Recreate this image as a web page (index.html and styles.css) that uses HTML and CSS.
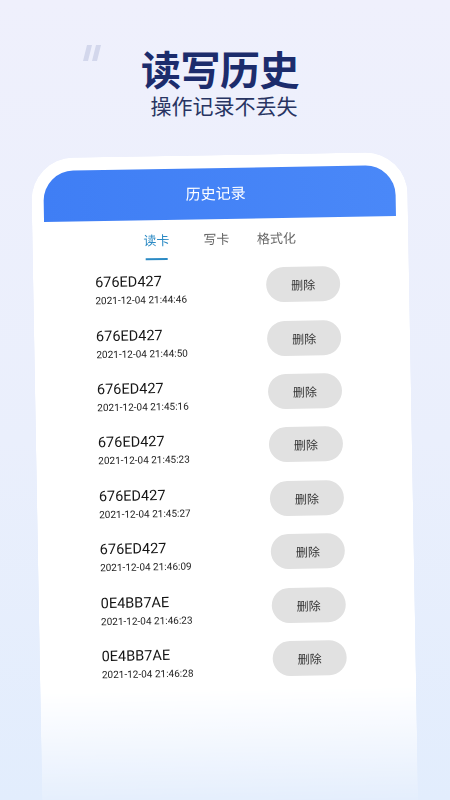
FILE: index.html
```html
<!DOCTYPE html>
<html lang="zh-CN">
<head>
  <meta charset="UTF-8">
  <meta name="viewport" content="width=device-width, initial-scale=1">
  <title>读写历史</title>
  <link rel="stylesheet" href="styles.css">
</head>
<body>
  <div class="hero">
    <svg class="quote" width="18" height="16" viewBox="0 0 18 16">
      <polygon points="4,0 9,0 5,16 0,16" fill="#d3d7ec"/>
      <polygon points="13,0 18,0 14,16 9,16" fill="#d3d7ec"/>
    </svg>
    <div class="title">读写历史</div>
    <div class="subtitle">操作记录不丢失</div>
  </div>

  <div class="phone">
    <div class="screen">
      <div class="topbar">历史记录</div>
      <div class="tabs">
        <div class="tab active">读卡</div>
        <div class="tab">写卡</div>
        <div class="tab">格式化</div>
      </div>
      <ul class="history">
        <li><div class="info"><span class="code">676ED427</span><span class="date">2021-12-04 21:44:46</span></div><button class="del-btn">删除</button></li>
        <li><div class="info"><span class="code">676ED427</span><span class="date">2021-12-04 21:44:50</span></div><button class="del-btn">删除</button></li>
        <li><div class="info"><span class="code">676ED427</span><span class="date">2021-12-04 21:45:16</span></div><button class="del-btn">删除</button></li>
        <li><div class="info"><span class="code">676ED427</span><span class="date">2021-12-04 21:45:23</span></div><button class="del-btn">删除</button></li>
        <li><div class="info"><span class="code">676ED427</span><span class="date">2021-12-04 21:45:27</span></div><button class="del-btn">删除</button></li>
        <li><div class="info"><span class="code">676ED427</span><span class="date">2021-12-04 21:46:09</span></div><button class="del-btn">删除</button></li>
        <li><div class="info"><span class="code">0E4BB7AE</span><span class="date">2021-12-04 21:46:23</span></div><button class="del-btn">删除</button></li>
        <li><div class="info"><span class="code">0E4BB7AE</span><span class="date">2021-12-04 21:46:28</span></div><button class="del-btn">删除</button></li>
      </ul>
    </div>
  </div>
</body>
</html>
```

FILE: styles.css
```css
html, body {
  height: 100%;
}
body {
  margin: 0;
  overflow: hidden;
  font-family: Roboto, "Noto Sans CJK SC", sans-serif;
  background: linear-gradient(180deg, #eff0fc 0%, #eaeffc 55%, #e2edfd 100%);
}
.hero {
  position: relative;
  padding-top: 46px;
  text-align: center;
}
.quote {
  position: absolute;
  left: 83px;
  top: 45px;
}
.title {
  font-family: "Noto Sans CJK SC", sans-serif;
  font-size: 40px;
  line-height: 44px;
  font-weight: 700;
  color: #1c2c6c;
  letter-spacing: -0.5px;
  padding-right: 10px;
}
.subtitle {
  font-family: "Noto Sans CJK SC", sans-serif;
  font-size: 21px;
  line-height: 26px;
  margin-top: 2px;
  color: #283462;
  padding-right: 2px;
}
.phone {
  width: 376px;
  margin: 37px auto 0 auto;
  padding: 13px 12px 0 12px;
  box-sizing: border-box;
  height: 700px;
  background: #fff;
  border-radius: 42px 42px 0 0;
  transform: rotate(-1deg);
  -webkit-mask-image: linear-gradient(180deg, #000 0%, #000 76%, rgba(0,0,0,0.06) 93%);
  mask-image: linear-gradient(180deg, #000 0%, #000 76%, rgba(0,0,0,0.06) 93%);
}
.screen {
  background: #fff;
}
.topbar {
  height: 51px;
  line-height: 52px;
  background: linear-gradient(90deg, #3f7ef5, #4a88f8);
  border-radius: 30px 30px 0 0;
  color: #fff;
  font-size: 15px;
  text-align: center;
  padding-right: 8px;
}
.tabs {
  display: flex;
  justify-content: center;
  padding: 12px 8px 0 0;
}
.tab {
  width: 60px;
  text-align: center;
  font-size: 13px;
  line-height: 18px;
  color: #666;
  padding-bottom: 10px;
}
.tab.active {
  color: #2b8ac4;
  background: linear-gradient(#2b8ac4, #2b8ac4) no-repeat center bottom / 22px 2.5px;
}
.history {
  list-style: none;
  margin: 0;
  padding: 0;
}
.history li {
  height: 53.4px;
  display: flex;
  align-items: center;
  padding: 0 57px 0 50px;
}
.info {
  flex: 1;
  display: flex;
  flex-direction: column;
  padding-top: 6px;
}
.code {
  font-size: 14.5px;
  line-height: 20px;
  color: #151515;
}
.date {
  font-size: 10px;
  line-height: 15px;
  color: #222;
}
.del-btn {
  width: 74px;
  height: 35px;
  border: none;
  border-radius: 18px;
  background: #e1e1e1;
  color: #333;
  font-family: "Noto Sans CJK SC", sans-serif;
  font-size: 12px;
  padding: 0;
}
```
